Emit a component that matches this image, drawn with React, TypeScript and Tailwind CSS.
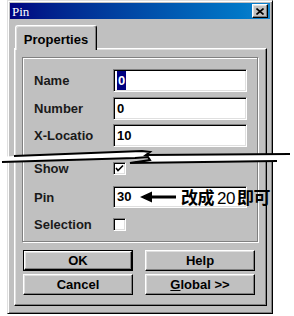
import React from "react";

const raised =
  "border border-t-white border-l-white border-r-black border-b-black shadow-[inset_-1px_-1px_0_#808080,inset_1px_1px_0_#dfdfdf]";
const sunken =
  "border border-t-[#808080] border-l-[#808080] border-r-white border-b-white shadow-[inset_1px_1px_0_#000,inset_-1px_-1px_0_#dfdfdf]";

const Label = ({ children }: { children: React.ReactNode }) => (
  <span className="w-[90px] pl-[11px] text-[13px] font-bold text-[#1a1a1a] leading-none">{children}</span>
);

const Field = ({ value, selected, h = 23 }: { value: string; selected?: boolean; h?: number }) => (
  <div
    className={`${sunken} w-[134px] bg-white flex items-center pl-[3px] text-[13px] font-bold text-black`}
    style={{ height: h }}
  >
    {selected ? <span className="bg-[#000080] text-white px-[1px]">{value}</span> : value}
  </div>
);

const Check = ({ checked }: { checked?: boolean }) => (
  <div className={`${sunken} w-[13px] h-[13px] bg-white flex items-center justify-center`}>
    {checked && (
      <svg width="9" height="9" viewBox="0 0 9 9">
        <path d="M1 4 L3 6.5 L8 1.5" stroke="#000" strokeWidth="1.6" fill="none" />
      </svg>
    )}
  </div>
);

const Button = ({ children, isDefault }: { children: React.ReactNode; isDefault?: boolean }) => (
  <div className={`w-[110px] h-[21px] ${isDefault ? "border border-black" : ""}`}>
    <div className={`${raised} w-full h-full flex items-center justify-center text-[13px] font-bold text-black`}>
      {children}
    </div>
  </div>
);

export default function App() {
  return (
    <div className="relative w-[294px] h-[316px] bg-white overflow-hidden font-['Liberation_Sans',sans-serif]">
      <div className="ml-[7px] w-[266px] h-[314px] flex flex-col bg-[#c0c0c0] border border-t-[#dfdfdf] border-l-[#dfdfdf] border-r-black border-b-black shadow-[inset_1px_1px_0_#fff,inset_-1px_-1px_0_#808080] p-[2px]">
        {/* Title bar */}
        <div className="shrink-0 h-[16px] flex items-center justify-between px-[2px] bg-blue-900 bg-gradient-to-r from-[#000080] to-[#1084d0]">
          <span className="text-white text-[13px] leading-none font-['Liberation_Serif',serif]">Pin</span>
          <div className={`${raised} w-[16px] h-[14px] bg-[#c0c0c0] flex items-center justify-center`}>
            <svg width="8" height="7" viewBox="0 0 8 7">
              <path d="M0.5 0.5 L7.5 6.5 M7.5 0.5 L0.5 6.5" stroke="#000" strokeWidth="1.6" />
            </svg>
          </div>
        </div>

        {/* Tab */}
        <div className="mt-[6px] ml-[5px] flex">
          <div className="relative z-10 -mb-[2px] w-[82px] h-[25px] bg-[#c0c0c0] border border-b-0 border-t-white border-l-white border-r-black rounded-t-[3px] shadow-[inset_-1px_0_0_#808080,inset_1px_1px_0_#dfdfdf] flex items-start justify-center pt-[4px] text-[13px] font-bold text-black">
            Properties
          </div>
        </div>

        {/* Panel */}
        <div className={`${raised} ml-[4px] w-[253px] h-[258px] bg-[#c0c0c0] flex flex-col pt-[8px] pl-[7px]`}>
          <div className="w-[236px] h-[185px] border border-[#808080] shadow-[1px_1px_0_#fff,inset_1px_1px_0_#fff] flex flex-col pt-[11px]">
            <div className="flex items-center h-[23px]">
              <Label>Name</Label>
              <Field value="0" selected />
            </div>
            <div className="flex items-center h-[23px] mt-[5px]">
              <Label>Number</Label>
              <Field value="0" />
            </div>
            <div className="flex items-center h-[23px] mt-[4px]">
              <Label>X-Locatio</Label>
              <Field value="10" />
            </div>
            <div className="flex items-center h-[13px] mt-[15px]">
              <Label>Show</Label>
              <Check checked />
            </div>
            <div className="flex items-center h-[22px] mt-[11px]">
              <Label>Pin</Label>
              <div className="relative">
                <Field value="30" h={22} />
                <div className="absolute left-[27px] top-0 h-[22px] flex items-center gap-[5px] whitespace-nowrap">
                  <svg width="36" height="12" viewBox="0 0 36 12">
                    <path d="M0 6 L12 0.5 L12 4.5 L36 4.5 L36 7.5 L12 7.5 L12 11.5 Z" fill="#000" />
                  </svg>
                  <span className="text-[17px] font-bold text-black leading-none tracking-[-0.5px] font-['Noto_Sans_CJK_TC','Noto_Sans_CJK_SC',sans-serif]">
                    改成<span className="font-['Liberation_Sans',sans-serif] font-normal ml-[3px] mr-[2px]">20</span>即可
                  </span>
                </div>
              </div>
            </div>
            <div className="flex items-center h-[13px] mt-[10px]">
              <Label>Selection</Label>
              <Check />
            </div>
          </div>

          {/* Buttons */}
          <div className="mt-[8px] grid grid-cols-[110px_110px] gap-x-[12px] gap-y-[3px] pl-[1px]">
            <Button isDefault>OK</Button>
            <Button>Help</Button>
            <Button>Cancel</Button>
            <Button>
              <span>
                <span className="underline">G</span>lobal &gt;&gt;
              </span>
            </Button>
          </div>
        </div>
      </div>

      {/* Break marks drawn over the screenshot */}
      <svg className="absolute left-0 top-0 pointer-events-none" width="294" height="316" viewBox="0 0 294 316">
        <path
          d="M14 156 L142 151 L150 152 L146 155 L290 154 L290 160 L277 161 L130 163 L150 160 L148 157 L135 158 L2 162 L0 162 L0 157 Z"
          fill="#fff"
        />
        <path d="M14 156 L142 151 L150 152 L146 155 L290 154" stroke="#000" strokeWidth="2" fill="none" />
        <path d="M2 162 L135 158 L148 157 L150 160 L130 163 L277 161" stroke="#000" strokeWidth="2" fill="none" />
      </svg>
    </div>
  );
}
